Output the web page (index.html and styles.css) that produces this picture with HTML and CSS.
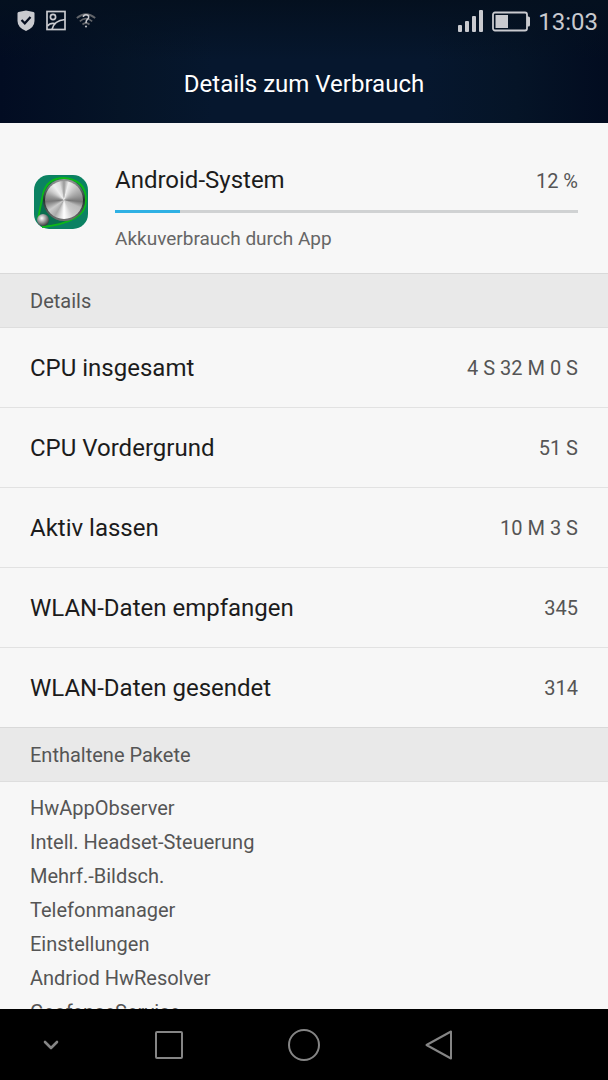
FILE: index.html
```html
<!DOCTYPE html>
<html lang="de">
<head>
<meta charset="utf-8">
<meta name="viewport" content="width=device-width, initial-scale=1">
<title>Details zum Verbrauch</title>
<link rel="stylesheet" href="styles.css">
</head>
<body>
<header class="top">
  <div class="status">
    <div class="status-group">
      <svg class="icon-notify" viewBox="0 0 20 24" width="20" height="24" aria-hidden="true">
        <path d="M10 1.500 17.500 3 Q18.500 3.300 18.500 4.500 V12 Q18.500 18.500 10 22 Q1.500 18.500 1.500 12 V4.500 Q1.500 3.300 2.500 3 Z" fill="#c9cacf"/>
        <path d="M5.500 11 8.800 14.300 14.500 8" fill="none" stroke="#050d1f" stroke-width="2.200"/>
      </svg>
      <svg class="icon-notify" viewBox="0 0 20 24" width="20" height="24" aria-hidden="true">
        <g fill="none" stroke="#c9cacf" stroke-width="1.700">
          <rect x="1" y="2.500" width="18" height="18"/>
          <circle cx="7" cy="8" r="2.600"/>
          <path d="M6 20.500 Q8 11.500 19 10.500 M1.500 17 Q4 13.500 9 14.500"/>
        </g>
      </svg>
      <svg class="icon-notify" viewBox="0 0 20 24" width="20" height="24" aria-hidden="true">
        <g fill="none" stroke="#62656a" stroke-width="1.700">
          <path d="M.8 9 Q10 1.500 19.200 9 M3.800 12.300 Q10 7 16.200 12.300 M6.500 15.500 Q10 12.500 13.500 15.500"/>
        </g>
        <path d="M7.300 8 Q7.500 5.700 10 5.700 Q12.700 5.700 12.700 8 Q12.700 9.500 11.200 10.700 Q10 11.700 10 14" fill="none" stroke="#c9cacf" stroke-width="1.500"/>
        <circle cx="10" cy="17.500" r="1.100" fill="#b4b5b9"/>
      </svg>
    </div>
    <div class="status-group status-right">
      <svg viewBox="0 0 26 24" width="26" height="24" aria-hidden="true">
        <g fill="#c9cacf">
          <rect x="0" y="16" width="4" height="7" rx="1"/>
          <rect x="7" y="12" width="4" height="11" rx="1"/>
          <rect x="14" y="7" width="4" height="16" rx="1"/>
          <rect x="21" y="1" width="4" height="22" rx="1"/>
        </g>
      </svg>
      <svg viewBox="0 0 38 24" width="38" height="24" aria-hidden="true">
        <rect x="1" y="3.500" width="34" height="18" rx="2" fill="none" stroke="#c9cacf" stroke-width="1.800"/>
        <rect x="3.500" y="6" width="12.500" height="13" fill="#c9cacf"/>
        <path d="M35 7.500 h1.500 q1.500 0 1.500 1.500 v7 q0 1.500-1.500 1.500 h-1.500z" fill="#c9cacf"/>
      </svg>
      <time class="clock">13:03</time>
    </div>
  </div>
  <h1 class="title">Details zum Verbrauch</h1>
</header>
<main class="content">
  <section class="app">
    <svg class="app-icon" viewBox="0 0 56 56" width="56" height="56" aria-hidden="true">
      <defs>
        <linearGradient id="rim" x1="0" y1="0" x2="0" y2="1">
          <stop offset="0" stop-color="#9b9b9b"/><stop offset=".5" stop-color="#24332e"/><stop offset="1" stop-color="#747474"/>
        </linearGradient>
        <radialGradient id="bead" cx=".4" cy=".35" r=".7">
          <stop offset="0" stop-color="#fff"/><stop offset=".5" stop-color="#999"/><stop offset="1" stop-color="#333"/>
        </radialGradient>
      </defs>
      <rect x="1" y="1" width="54" height="54" rx="15" fill="#0b8262"/>
      <path d="M5 45 10 20 Q14 4 31 4 Q53 6 53 26 Q53 38 42 44 Q30 51 9 53" fill="#0a6e50" stroke="#0db817" stroke-width="1.800"/>
      <circle cx="31" cy="26" r="21" fill="url(#rim)"/>
      <foreignObject x="12" y="7" width="38" height="38"><div class="knob"></div></foreignObject>
      <circle cx="10" cy="46" r="6" fill="url(#bead)"/>
    </svg>
    <div class="app-info">
      <div class="app-head">
        <h2 class="label" id="app-name">Android-System</h2>
        <span class="value">12 %</span>
      </div>
      <div class="bar" role="progressbar" aria-labelledby="app-name" aria-valuemin="0" aria-valuemax="100" aria-valuenow="12"><div class="bar-fill"></div></div>
      <p class="caption">Akkuverbrauch durch App</p>
    </div>
  </section>
  <h2 class="section">Details</h2>
  <dl class="rows">
    <div class="row"><dt class="label">CPU insgesamt</dt><dd class="value">4 S 32 M 0 S</dd></div>
    <div class="row"><dt class="label">CPU Vordergrund</dt><dd class="value">51 S</dd></div>
    <div class="row"><dt class="label">Aktiv lassen</dt><dd class="value">10 M 3 S</dd></div>
    <div class="row"><dt class="label">WLAN-Daten empfangen</dt><dd class="value">345</dd></div>
    <div class="row"><dt class="label">WLAN-Daten gesendet</dt><dd class="value">314</dd></div>
  </dl>
  <h2 class="section">Enthaltene Pakete</h2>
  <ul class="packages">
    <li>HwAppObserver</li>
    <li>Intell. Headset-Steuerung</li>
    <li>Mehrf.-Bildsch.</li>
    <li>Telefonmanager</li>
    <li>Einstellungen</li>
    <li>Andriod HwResolver</li>
    <li>GeofenceService</li>
  </ul>
</main>
<nav class="nav">
  <button class="nav-button nav-hide" type="button" aria-label="Leiste ausblenden">
    <svg viewBox="0 0 36 36" width="36" height="36"><path d="M12 15 18 21 24 15" stroke-width="2.600"/></svg>
  </button>
  <button class="nav-button" type="button" aria-label="Letzte Apps">
    <svg viewBox="0 0 36 36" width="36" height="36"><rect x="5" y="5" width="26" height="26" rx="1"/></svg>
  </button>
  <button class="nav-button" type="button" aria-label="Startseite">
    <svg viewBox="0 0 36 36" width="36" height="36"><circle cx="18" cy="18" r="15"/></svg>
  </button>
  <button class="nav-button" type="button" aria-label="Zurück">
    <svg viewBox="0 0 36 36" width="36" height="36"><path d="M30 4.500 V31.500 L5.500 18 Z"/></svg>
  </button>
</nav>
</body>
</html>
```
FILE: styles.css
```css
* { box-sizing: border-box; margin: 0; padding: 0; }

body {
  display: flex;
  flex-direction: column;
  height: 100vh;
  overflow: hidden;
  background: #f7f7f7;
  color: #1c1c1c;
  font-family: Roboto, "Noto Sans", sans-serif;
}

svg { display: block; flex: none; }

.top {
  flex: none;
  padding-bottom: 23px;
  background: linear-gradient(to bottom, #04101f, transparent 60px),
    linear-gradient(to right, #020c22, #051427 20%, #06172e 35%, #06172e 70%, #051427 85%, #020c20);
  color: #fff;
}

.status {
  display: flex;
  justify-content: space-between;
  align-items: center;
  height: 44px;
  padding: 0 10px 0 16px;
}

.status-group { display: flex; align-items: center; gap: 10px; padding-bottom: 2px; }
.status-right { gap: 8px; padding-bottom: 0; }
.status-right svg { margin-bottom: 2px; }

.clock { color: #c9cacf; font-size: 24px; line-height: 32px; }

.title {
  padding-top: 24px;
  font-size: 24px;
  font-weight: 400;
  line-height: 32px;
  text-align: center;
}

.content { flex: 1; min-height: 0; overflow: hidden; }

.app {
  display: flex;
  align-items: flex-start;
  gap: 26px;
  padding: 40px 30px 20px 33px;
}

.app-icon { margin-top: 11px; }

.knob {
  width: 38px;
  height: 38px;
  border-radius: 50%;
  background: conic-gradient(#999, #eee 15deg, #bbb 50deg, #999 75deg, #777 95deg, #bbb 115deg, #ccc 150deg, #fff 180deg, #aaa 210deg, #ccc 235deg, #777 265deg, #999 285deg, #ccc 305deg, #eee 325deg, #ddd 345deg, #999);
}

.app-info { flex: 1; }

.app-head {
  display: flex;
  justify-content: space-between;
  align-items: center;
  height: 34px;
}

.app-head .value { padding-top: 2px; }

.label { font-size: 24px; font-weight: 400; line-height: 32px; }
.value { color: #555; font-size: 20px; line-height: 32px; }

.bar { height: 3px; margin-top: 13px; background: #d0d2d3; }
.bar-fill { width: 14%; height: 100%; background: #2fb1e4; }

.caption { margin-top: 12px; color: #666; font-size: 19px; line-height: 28px; }

.section {
  height: 55px;
  padding: 0 30px;
  border-top: 1px solid #d9d9d9;
  border-bottom: 1px solid #dedede;
  background: #e9e9e9;
  color: #555;
  font-size: 20px;
  font-weight: 400;
  line-height: 54px;
}

.row {
  display: flex;
  justify-content: space-between;
  align-items: center;
  height: 80px;
  padding: 0 30px;
  border-bottom: 1px solid #e2e2e2;
}

.row:last-child { height: 79px; border-bottom: 0; }

.packages {
  padding: 9px 30px;
  list-style: none;
  color: #555;
  font-size: 20px;
  line-height: 34px;
}

.nav {
  display: grid;
  grid-template-columns: 101fr 135fr 135fr 135fr 102fr;
  flex: none;
  height: 71px;
  background: #000;
}

.nav-button {
  display: flex;
  justify-content: center;
  align-items: center;
  border: 0;
  background: none;
}

.nav-button svg {
  fill: none;
  stroke: #858585;
  stroke-width: 2;
  stroke-linejoin: round;
  stroke-linecap: round;
}
```
